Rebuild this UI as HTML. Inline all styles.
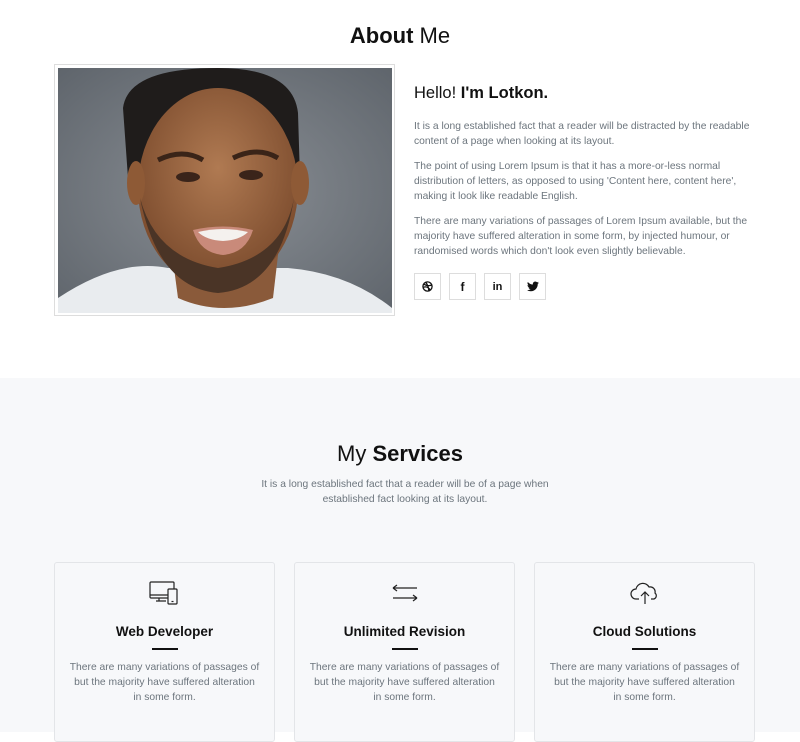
<!DOCTYPE html>
<html><head><meta charset="utf-8"><style>
*{box-sizing:border-box;margin:0;padding:0}
body{width:800px;height:732px;overflow:hidden;background:#fff;font-family:"Liberation Sans",sans-serif;color:#212529}
h2{font-weight:400;font-size:22px;text-align:center;color:#111}
h2 b{font-weight:600}
.about{height:378px;position:relative}
.about h2{position:absolute;top:23px;width:100%}
.photo{position:absolute;left:54px;top:64px;width:341px;height:252px;border:1px solid #ddd;padding:3px;background:#fff}
.right{position:absolute;left:414px;top:84px;width:345px}
.right h3{font-size:16.5px;font-weight:400;color:#111;margin-bottom:16px}
.right h3 b{font-weight:600}
.right p{font-size:10.3px;line-height:15px;color:#6c757d;margin-bottom:10px}
.soc{display:flex;gap:8px;margin-top:14px}
.soc span{width:27px;height:27px;border:1.5px solid #ddd;display:flex;align-items:center;justify-content:center;font-size:12px;font-weight:700;color:#111}
.serv{position:absolute;top:378px;left:0;width:800px;height:354px;background:#f7f8fa}
.serv h2{position:absolute;top:63px;width:100%}
.serv .sub{position:absolute;top:99px;left:250px;width:310px;text-align:center;font-size:10.3px;line-height:15px;color:#6c757d}
.card{position:absolute;top:184px;width:221px;height:180px;border:1px solid #e3e5e8;border-radius:3px;background:#f7f8fa;text-align:center}
.card svg{position:absolute;top:17px;left:94px}
.card h4{position:absolute;top:61px;width:100%;font-size:13.5px;font-weight:600;color:#111}
.card .ln{position:absolute;top:85px;left:97px;width:26px;height:2px;background:#111}
.card p{position:absolute;top:97px;left:0;right:0;font-size:10.3px;line-height:15px;color:#6c757d;white-space:nowrap}
</style></head><body>
<div class="about">
<h2><b>About</b> Me</h2>
<div class="photo">
<svg width="334" height="245" viewBox="0 0 334 245">
<defs>
<radialGradient id="bg" cx="0.5" cy="0.5" r="0.7"><stop offset="0" stop-color="#8a8f95"/><stop offset="1" stop-color="#5f656c"/></radialGradient>
<radialGradient id="sk" cx="0.5" cy="0.4" r="0.6"><stop offset="0" stop-color="#b07a52"/><stop offset="1" stop-color="#7a4a2c"/></radialGradient>
</defs>
<rect width="334" height="245" fill="url(#bg)"/>
<path d="M0 230 Q60 190 110 200 L230 200 Q290 205 334 240 L334 245 L0 245Z" fill="#e9ecef"/>
<path d="M112 170 L222 170 L215 230 Q165 250 120 230Z" fill="#8a5a3a"/>
<path d="M65 40 Q70 0 160 0 Q235 0 240 45 L242 110 L230 110 Q220 40 160 30 Q95 35 85 110 L70 110Z" fill="#1f1c1b"/>
<ellipse cx="160" cy="120" rx="80" ry="100" fill="url(#sk)"/>
<ellipse cx="78" cy="115" rx="9" ry="22" fill="#8e5a36"/>
<ellipse cx="242" cy="115" rx="9" ry="22" fill="#8e5a36"/>
<path d="M82 130 Q100 220 160 225 Q222 220 236 130 Q225 190 160 200 Q98 190 82 130Z" fill="#4a3426"/>
<path d="M135 162 Q165 155 195 162 Q188 185 165 187 Q142 185 135 162Z" fill="#c98a7a"/>
<path d="M140 164 Q165 158 190 164 Q182 172 165 173 Q148 172 140 164Z" fill="#f4f1ee"/>
<ellipse cx="130" cy="109" rx="12" ry="5" fill="#3a241a"/>
<ellipse cx="193" cy="107" rx="12" ry="5" fill="#3a241a"/>
<path d="M100 92 Q125 80 145 92" stroke="#3a2418" stroke-width="5" fill="none"/>
<path d="M175 90 Q200 78 220 90" stroke="#3a2418" stroke-width="5" fill="none"/>
</svg>
</div>
<div class="right">
<h3>Hello! <b>I'm Lotkon.</b></h3>
<p>It is a long established fact that a reader will be distracted by the readable content of a page when looking at its layout.</p>
<p>The point of using Lorem Ipsum is that it has a more-or-less normal distribution of letters, as opposed to using 'Content here, content here', making it look like readable English.</p>
<p>There are many variations of passages of Lorem Ipsum available, but the majority have suffered alteration in some form, by injected humour, or randomised words which don't look even slightly believable.</p>
<div class="soc">
<span><svg width="11" height="11" viewBox="0 0 12 12" fill="none" stroke="#111" stroke-width="1.4"><circle cx="6" cy="6" r="5"/><path d="M2 3.5Q6 6 10.5 4.5M1.2 7Q6 5 9 10M4 1.3Q7 5 7.5 10.8"/></svg></span>
<span>f</span>
<span style="font-size:11px">in</span>
<span><svg width="12" height="11" viewBox="0 0 24 20"><path fill="#111" d="M24 2.4a10 10 0 0 1-2.8.8A5 5 0 0 0 23.3.4a10 10 0 0 1-3.1 1.2A4.9 4.9 0 0 0 11.8 6 14 14 0 0 1 1.7.9a4.9 4.9 0 0 0 1.5 6.6 5 5 0 0 1-2.2-.6 4.9 4.9 0 0 0 3.900 4.8 5 5 0 0 1-2.2.1 4.9 4.9 0 0 0 4.6 3.4A9.9 9.9 0 0 1 0 17.2 14 14 0 0 0 7.5 19.4c9 0 14-7.5 14-14v-.6A10 10 0 0 0 24 2.4z"/></svg></span>
</div>
</div>
</div>
<div class="serv">
<h2>My <b>Services</b></h2>
<div class="sub">It is a long established fact that a reader will be of a page when established fact looking at its layout.</div>
<div class="card" style="left:54px">
<svg width="32" height="26" viewBox="0 0 32 26" fill="none" stroke="#222" stroke-width="1.2"><rect x="1" y="2" width="24" height="16" rx="1"/><path d="M1 15H19M10 18v3M7 21h10"/><rect x="19" y="9" width="9" height="15" rx="1" fill="#f7f8fa"/><path d="M22.5 21.5h2"/></svg>
<h4>Web Developer</h4><div class="ln"></div>
<p>There are many variations of passages of<br>but the majority have suffered alteration<br>in some form.</p></div>
<div class="card" style="left:294px">
<svg width="32" height="26" viewBox="0 0 32 26" fill="none" stroke="#222" stroke-width="1.2"><path d="M4 8H28M4 8l4-3M4 8l4 3M4 18H28M28 18l-4-3M28 18l-4 3"/></svg>
<h4>Unlimited Revision</h4><div class="ln"></div>
<p>There are many variations of passages of<br>but the majority have suffered alteration<br>in some form.</p></div>
<div class="card" style="left:534px">
<svg width="32" height="26" viewBox="0 0 32 26" fill="none" stroke="#222" stroke-width="1.2"><path d="M10 19H7a5 5 0 0 1 0-10 7 7 0 0 1 13-2 5 5 0 0 1 6 6 3.5 3.5 0 0 1-1 6h-3"/><path d="M16 24V12M12 16l4-4 4 4"/></svg>
<h4>Cloud Solutions</h4><div class="ln"></div>
<p>There are many variations of passages of<br>but the majority have suffered alteration<br>in some form.</p></div>
</div>
</body></html>
